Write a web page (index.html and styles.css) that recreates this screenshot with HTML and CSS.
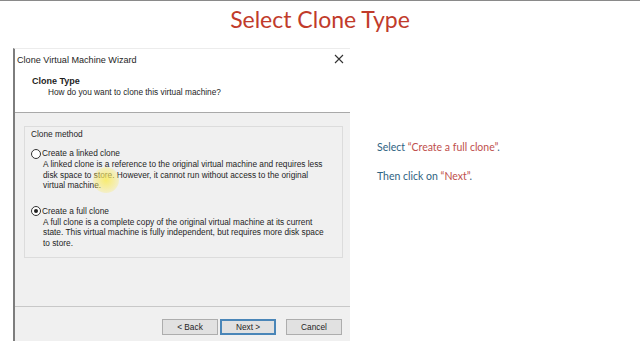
FILE: index.html
```html
<!DOCTYPE html>
<html lang="en">
<head>
  <meta charset="UTF-8" />
  <title>Select Clone Type</title>
  <link rel="stylesheet" href="styles.css">
</head>
<body>

  <div class="slide">
    <h1 class="slide-title">Select Clone Type</h1>

    <div class="stage">
      <div class="wizard">
        <div class="titlebar">
          <span>Clone Virtual Machine Wizard</span>
          <svg class="close" width="10" height="10" viewBox="0 0 10 10">
            <path d="M1 1 L9 9 M9 1 L1 9" stroke="#333" stroke-width="1.1" fill="none" />
          </svg>
        </div>

        <div class="wiz-header">
          <div class="wiz-heading">Clone Type</div>
          <div class="wiz-sub">How do you want to clone this virtual machine?</div>
        </div>

        <div class="wiz-body">
          <div class="group">
            <div class="group-label">Clone method</div>

            <div class="option">
              <div class="radio-row"><span class="radio"></span>Create a linked clone</div>
              <p class="desc">A linked clone is a reference to the original virtual machine and requires less disk space to store. However, it cannot run without access to the original virtual machine.</p>
            </div>

            <div class="option">
              <div class="radio-row"><span class="radio checked"></span>Create a full clone</div>
              <p class="desc">A full clone is a complete copy of the original virtual machine at its current state. This virtual machine is fully independent, but requires more disk space to store.</p>
            </div>
          </div>
        </div>

        <div class="wiz-footer">
          <button class="btn">&lt; Back</button>
          <button class="btn primary">Next &gt;</button>
          <button class="btn cancel">Cancel</button>
        </div>

        <!-- cursor highlight -->
        <div class="pointer-glow"></div>
      </div>

      <div class="notes">
        <p>Select <em>“Create a full clone”</em>.</p>
        <p>Then click on <em>“Next”</em>.</p>
      </div>
    </div>
  </div>

</body>
</html>
```

FILE: styles.css
```css
* {
  margin: 0; padding: 0; box-sizing: border-box;
}
html, body {
  width: 640px;
  height: 360px;
  overflow: hidden;
  background: #fff;
}

.slide {
  height: 360px;
  border-top: 1px solid #8a8a8a;
}

.slide-title {
  height: 47px;
  padding-top: 2px;
  text-align: center;
  font-family: Lato, "Open Sans", sans-serif;
  font-weight: 400;
  font-size: 23px;
  line-height: 32px;
  color: #c13b2b;
}

/* Layout */
.stage {
  display: flex;
  align-items: flex-start;
}

/* Wizard window */
.wizard {
  position: relative;
  margin-left: 13px;
  width: 337px;
  height: 293px;
  display: flex;
  flex-direction: column;
  border-left: 2px solid #7d7d7d;
  border-top: 1px solid #ececec;
  font-family: "Liberation Sans", Arial, sans-serif;
  font-size: 8.3px;
  color: #1e1e1e;
  background: #f0f0f0;
}

.titlebar {
  height: 21px;
  display: flex;
  align-items: center;
  justify-content: space-between;
  padding: 0 6px 0 2px;
  background: #fff;
  font-size: 9.1px;
}
.titlebar .close {
  margin-top: -1px;
}

.wiz-header {
  height: 43px;
  padding: 6px 0 0 17px;
  background: #fff;
  border-bottom: 1px solid #a9a9a9;
}
.wiz-heading {
  font-weight: bold;
  font-size: 9px;
  line-height: 11px;
}
.wiz-sub {
  padding-left: 16px;
  line-height: 11px;
}

.wiz-body {
  flex: 1;
  padding: 13px 7px 0 9px;
  border-bottom: 1px solid #c8c8c8;
}

.group {
  height: 132px;
  padding: 2px 6px 0 6px;
  border: 1px solid #dcdcdc;
}
.group-label {
  line-height: 11px;
  margin-bottom: 8px;
}

.option {
  margin-bottom: 15px;
}
.radio-row {
  display: flex;
  align-items: center;
  line-height: 11px;
}
.radio {
  width: 10px;
  height: 10px;
  margin-right: 1px;
  border: 1px solid #333;
  border-radius: 50%;
  background: #fff;
  position: relative;
}
.radio.checked::after {
  content: "";
  position: absolute;
  top: 2px; left: 2px;
  width: 4px; height: 4px;
  border-radius: 50%;
  background: #222;
}
.desc {
  padding-left: 12px;
  padding-right: 6px;
  line-height: 10.5px;
}

.wiz-footer {
  height: 34px;
  display: flex;
  align-items: center;
  justify-content: flex-end;
  padding: 6px 8px 0 0;
}
.btn {
  width: 56px;
  height: 16px;
  margin-left: 2px;
  font-family: "Liberation Sans", Arial, sans-serif;
  font-size: 8.3px;
  color: #1e1e1e;
  background: #e1e1e1;
  border: 1px solid #adadad;
}
.btn.primary {
  border: 2px solid #4a86b8;
}
.btn.cancel {
  margin-left: 10px;
}

.pointer-glow {
  position: absolute;
  left: 78px;
  top: 118px;
  width: 26px;
  height: 26px;
  border-radius: 50%;
  background: radial-gradient(circle, rgba(250, 235, 90, 0.85) 0%, rgba(250, 235, 110, 0.5) 50%, rgba(255, 240, 150, 0) 100%);
}

/* Instructions */
.notes {
  margin-left: 27px;
  padding-top: 92px;
  font-family: Lato, "Open Sans", sans-serif;
  font-size: 10.5px;
  color: #2f6382;
}
.notes p {
  line-height: 14px;
  margin-bottom: 15px;
}
.notes em {
  font-style: normal;
  color: #c0504d;
}
```
